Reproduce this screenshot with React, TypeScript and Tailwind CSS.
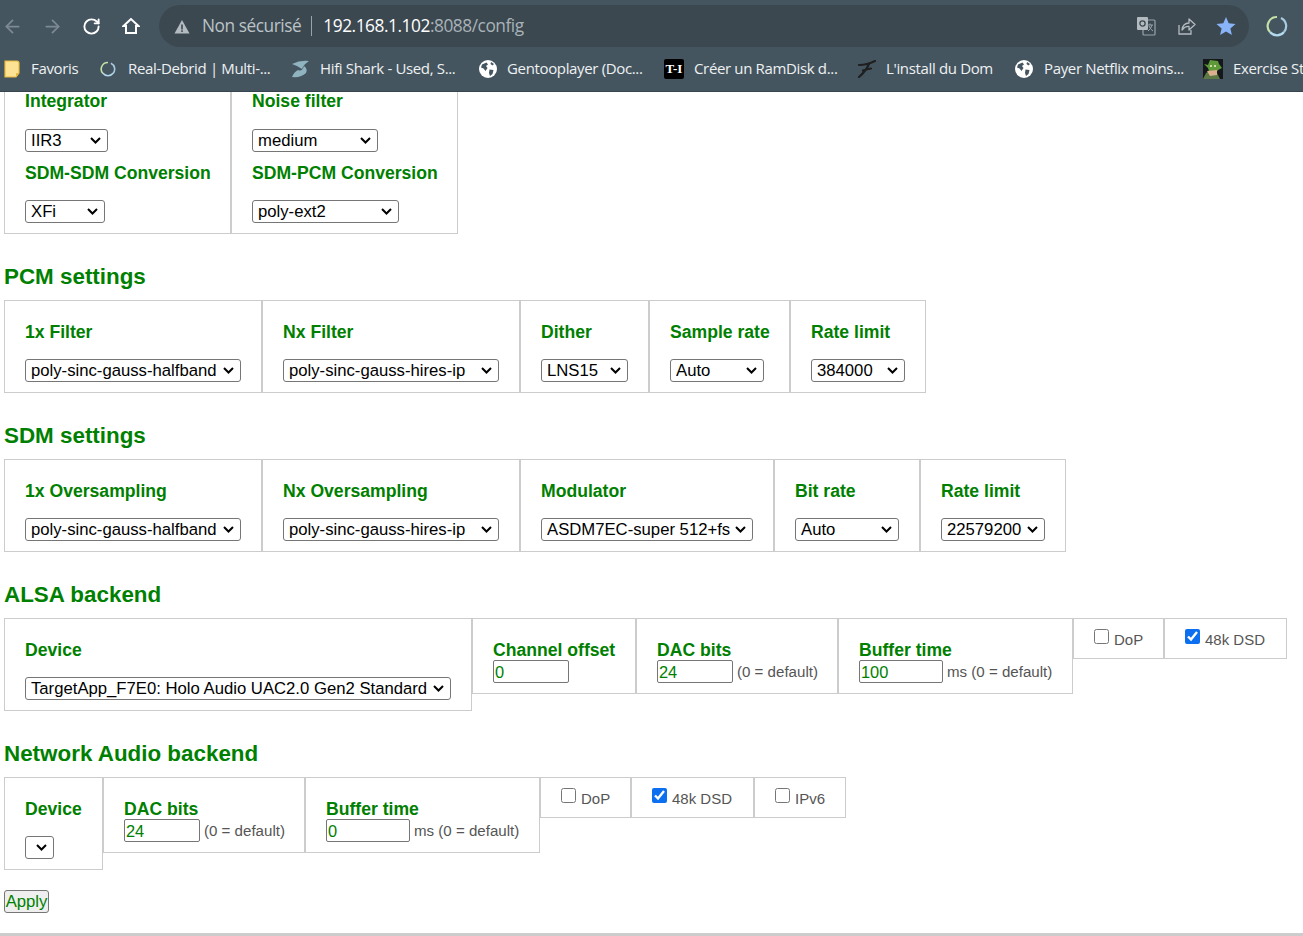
import React from "react";
import { ArrowLeft, ArrowRight, RotateCw } from "lucide-react";

const Globe = () => (
  <svg width="18" height="18" viewBox="0 0 18 18" className="shrink-0">
    <circle cx="9" cy="9" r="9" fill="#fff" />
    <path d="M3 4.5 L7.5 2.5 L9 4.5 L7 6 L8.5 8 L6.5 11 L4.5 8.5 L2 7.5 Z M10.5 9.5 L14.5 10 L13.5 14 L11 16 L10 13 Z M12 2 L15 4 L13.5 5.5 L11.5 4 Z" fill="#455560" />
  </svg>
);

const Ring = ({ size = 16 }: { size?: number }) => (
  <svg width={size} height={size} viewBox="0 0 22 22" className="shrink-0">
    <path d="M11 2 A9 9 0 0 0 4 17" fill="none" stroke="#c5e1a5" strokeWidth="2.2" />
    <path d="M4 17 A9 9 0 0 0 18 17" fill="none" stroke="#b3d9ee" strokeWidth="2.2" />
    <path d="M18 17 A9 9 0 0 0 15 3" fill="none" stroke="#a9cbe0" strokeWidth="2.2" />
  </svg>
);

const bookmarks = [
  { label: "Real-Debrid | Multi-...", width: "w-[191px]", gap: "gap-3", icon: <Ring /> },
  {
    label: "Hifi Shark - Used, S...",
    width: "w-[188px]",
    gap: "gap-[11px]",
    icon: (
      <svg width="18" height="18" viewBox="0 0 18 18" className="shrink-0">
        <path d="M1 4 Q9 0 18 1 Q13 4 11 9 Q7 6 1 4 Z M1 17 Q3 12 7 10 Q11 12 13 6 Q17 9 15 13 Q10 18 1 17 Z" fill="#8fb4c0" />
      </svg>
    ),
  },
  { label: "Gentooplayer (Doc...", width: "w-[185px]", gap: "gap-[10px]", icon: <Globe /> },
  {
    label: "Créer un RamDisk d...",
    width: "w-[193px]",
    gap: "gap-[10px]",
    icon: (
      <div className="flex h-5 w-5 shrink-0 items-center justify-center rounded-[2px] bg-black font-['Liberation_Serif',serif] text-[13px] font-bold leading-none tracking-normal text-white">
        T-I
      </div>
    ),
  },
  {
    label: "L'install du Dom",
    width: "w-[158px]",
    gap: "gap-[10px]",
    icon: (
      <svg width="19" height="18" viewBox="0 0 19 18" className="shrink-0">
        <path d="M2 5 Q10 5 18 1 M12 4 Q9 11 2 17 M6 10.5 Q10 9 14 8.5" fill="none" stroke="#1f1f1f" strokeWidth="2.2" strokeLinecap="round" />
      </svg>
    ),
  },
  { label: "Payer Netflix moins...", width: "w-[188px]", gap: "gap-[11px]", icon: <Globe /> },
  {
    label: "Exercise Static",
    width: "w-[120px]",
    gap: "gap-[10px]",
    icon: (
      <svg width="20" height="20" viewBox="0 0 20 20" className="shrink-0">
        <rect width="20" height="20" fill="#15181a" />
        <path d="M1 5 L5 6 L7 1 L15 2 L16 5 L19 9 L15 11 L13 14 L6 12 L5 9 Z" fill="#5e9a3a" />
        <path d="M0 20 L3 14 L6 12 L14 14 L17 20 Z" fill="#5d7a45" />
        <path d="M4 12 L14 11 L14 16 L7 17 Z" fill="#dcb08f" />
        <circle cx="8" cy="7" r="1" fill="#f2f2c8" />
        <circle cx="12" cy="7" r="1" fill="#f2f2c8" />
      </svg>
    ),
  },
];

const BrowserChrome = () => (
  <header className="h-[92px] shrink-0 overflow-hidden border-b border-[#37454e] bg-[#455560] font-['Open_Sans',sans-serif] text-white">
    <div className="flex h-[47px] items-center pt-[5px]">
      <div className="flex w-[159px] shrink-0 items-center pl-[2px]">
        <ArrowLeft size={21} className="text-[#7d8a93]" />
        <ArrowRight size={21} className="ml-[19px] text-[#7d8a93]" />
        <RotateCw size={19} strokeWidth={2.4} className="ml-[19px] text-white" />
        <svg width="18" height="18" viewBox="0 0 18 18" className="ml-[21px]">
          <path d="M9 2 L1.5 9 H4 V16 H14 V9 H16.5 Z" fill="none" stroke="#fff" strokeWidth="2" strokeLinejoin="miter" />
        </svg>
      </div>
      <div className="flex h-[42px] w-[1090px] shrink-0 items-center rounded-full bg-[#3b4850] pl-[15px] pr-[13px] text-[17.3px] tracking-[-0.45px]">
        <svg width="16" height="15" viewBox="0 0 16 15">
          <path d="M8 1 L15.5 14.5 H0.5 Z" fill="#b4bbc0" />
          <rect x="7.2" y="5.5" width="1.6" height="5" fill="#3b4850" />
          <rect x="7.2" y="11.3" width="1.6" height="1.6" fill="#3b4850" />
        </svg>
        <span className="ml-[12px] text-[#bcc3c8]">Non sécurisé</span>
        <span className="ml-[10px] h-[20px] w-px bg-[#98a2a9]" />
        <span className="ml-[11px] text-white">192.168.1.102</span>
        <span className="text-[#a9b2b8]">:8088/config</span>
        <div className="ml-auto flex items-center gap-[20px]">
          <svg width="20" height="20" viewBox="0 0 20 20">
            <rect x="7" y="4" width="12" height="15" rx="1" fill="none" stroke="#9aa4aa" strokeWidth="1.2" />
            <rect x="1" y="1" width="11" height="13" rx="1" fill="#b4bbc0" />
            <circle cx="6.5" cy="7.5" r="2.6" fill="none" stroke="#3b4850" strokeWidth="1.3" />
            <path d="M11 9 H17 M14 7.5 V9 M12 15 Q15 13 16 9 M13 10 Q14 13 17 15" fill="none" stroke="#9aa4aa" strokeWidth="1" />
          </svg>
          <svg width="20" height="20" viewBox="0 0 20 20">
            <path d="M3 9 V18 H15 V14" fill="none" stroke="#b4bbc0" strokeWidth="1.3" />
            <path d="M6 14 Q7 7 13 7 V3 L19 8.5 L13 14 V10.5 Q9 10 6 14 Z" fill="none" stroke="#b4bbc0" strokeWidth="1.3" strokeLinejoin="round" />
          </svg>
          <svg width="20" height="20" viewBox="0 0 20 20">
            <path d="M10 1 L12.7 7.3 L19.5 7.9 L14.4 12.4 L15.9 19 L10 15.5 L4.1 19 L5.6 12.4 L0.5 7.9 L7.3 7.3 Z" fill="#8ab4f8" />
          </svg>
        </div>
      </div>
      <div className="ml-[17px]">
        <Ring size={22} />
      </div>
    </div>
    <div className="flex h-[43px] items-center whitespace-nowrap text-[15px] tracking-[-0.35px] text-[#eef1f2]">
      <div className="flex w-[100px] shrink-0 items-center pl-[4px]">
        <svg width="16" height="18" viewBox="0 0 16 18" className="shrink-0">
          <path d="M1 1 H13 Q15 1 15 3 V13 L12 17 H1 Z" fill="#fde293" stroke="#e8b93f" strokeWidth="1.2" />
          <path d="M12 17 V13 H15 Z" fill="#e8b93f" />
        </svg>
        <span className="ml-[11px]">Favoris</span>
      </div>
      {bookmarks.map((item) => (
        <div key={item.label} className={`flex shrink-0 items-center ${item.width} ${item.gap}`}>
          {item.icon}
          <span>{item.label}</span>
        </div>
      ))}
    </div>
  </header>
);

const Cell = ({ className, children }: { className: string; children: React.ReactNode }) => (
  <div className={`shrink-0 border border-[#ccc] ${className}`}>{children}</div>
);

const Label = ({ children }: { children: React.ReactNode }) => (
  <div className="h-5 whitespace-nowrap text-[17.6px] font-bold leading-5 text-[#008000]">{children}</div>
);

// native arrow on the sandbox browser is thinner than the one in the picture, so it gets its own
const Choice = ({ value, className }: { value?: string; className: string }) => (
  <div className={`relative h-[23px] ${className}`}>
    <select
      defaultValue={value}
      className="block h-[23px] w-full appearance-none rounded-[3px] border border-[#767676] bg-white py-0 pl-[5px] text-[16.7px] leading-[21px] text-black"
    >
      {value && <option value={value}>{value}</option>}
    </select>
    <svg width="11" height="7" viewBox="0 0 11 7" className="pointer-events-none absolute right-[7px] top-2">
      <path d="M1 1 L5.5 5.5 L10 1" fill="none" stroke="#000" strokeWidth="2" />
    </svg>
  </div>
);

const NumberBox = ({ value, className }: { value: string; className: string }) => (
  <input
    type="text"
    defaultValue={value}
    className={`h-[23px] rounded-[2px] border border-[#767676] bg-white px-px pt-px text-[16.4px] text-[#008000] ${className}`}
  />
);

const Hint = ({ children }: { children: React.ReactNode }) => (
  <span className="ml-1 mt-px whitespace-nowrap text-[15.1px] text-[#555]">{children}</span>
);

const Check = ({ label, checked, className }: { label: string; checked?: boolean; className: string }) => (
  <Cell className={`flex h-[41px] items-start pl-5 pt-[9px] ${className}`}>
    <input type="checkbox" defaultChecked={checked} className="mt-[1px] h-[15px] w-[15px] accent-[#0b6ff0]" />
    <span className="ml-[5px] mt-[2px] whitespace-nowrap text-[15px] leading-5 text-[#555]">{label}</span>
  </Cell>
);

const Heading = ({ children }: { children: React.ReactNode }) => (
  <h2 className="pb-[11px] pt-[31px] text-[22.4px] font-bold leading-6 text-[#008000]">{children}</h2>
);

const SelectCell = ({ label, value, width, selectWidth }: { label: string; value: string; width: string; selectWidth: string }) => (
  <Cell className={`h-[93px] pl-5 pt-[21px] ${width}`}>
    <Label>{label}</Label>
    <Choice value={value} className={`mt-[17px] ${selectWidth}`} />
  </Cell>
);

const InputCell = ({ label, width, children }: { label: string; width: string; children: React.ReactNode }) => (
  <Cell className={`h-[76px] pl-5 pt-[21px] ${width}`}>
    <Label>{label}</Label>
    <div className="flex items-center">{children}</div>
  </Cell>
);

export default function App() {
  return (
    <div className="flex h-[936px] flex-col overflow-hidden bg-white font-['Liberation_Sans',Arial,sans-serif]">
      <BrowserChrome />
      <main className="px-1">
        <div className="flex">
          <div className="w-[227px] border-x border-b border-[#ccc] pl-5 pr-2">
            <div className="-mt-px">
              <Label>Integrator</Label>
            </div>
            <Choice value="IIR3" className="mt-[18px] w-[83px]" />
            <div className="h-[11px]" />
            <Label>SDM-SDM Conversion</Label>
            <Choice value="XFi" className="mt-[17px] w-[80px]" />
            <div className="h-[10px]" />
          </div>
          <div className="w-[227px] border-x border-b border-[#ccc] pl-5 pr-2">
            <div className="-mt-px">
              <Label>Noise filter</Label>
            </div>
            <Choice value="medium" className="mt-[18px] w-[126px]" />
            <div className="h-[11px]" />
            <Label>SDM-PCM Conversion</Label>
            <Choice value="poly-ext2" className="mt-[17px] w-[147px]" />
            <div className="h-[10px]" />
          </div>
        </div>

        <Heading>PCM settings</Heading>
        <div className="flex">
          <SelectCell label="1x Filter" value="poly-sinc-gauss-halfband" width="w-[258px]" selectWidth="w-[216px]" />
          <SelectCell label="Nx Filter" value="poly-sinc-gauss-hires-ip" width="w-[258px]" selectWidth="w-[216px]" />
          <SelectCell label="Dither" value="LNS15" width="w-[129px]" selectWidth="w-[87px]" />
          <SelectCell label="Sample rate" value="Auto" width="w-[141px]" selectWidth="w-[94px]" />
          <SelectCell label="Rate limit" value="384000" width="w-[136px]" selectWidth="w-[94px]" />
        </div>

        <Heading>SDM settings</Heading>
        <div className="flex">
          <SelectCell label="1x Oversampling" value="poly-sinc-gauss-halfband" width="w-[258px]" selectWidth="w-[216px]" />
          <SelectCell label="Nx Oversampling" value="poly-sinc-gauss-hires-ip" width="w-[258px]" selectWidth="w-[216px]" />
          <SelectCell label="Modulator" value="ASDM7EC-super 512+fs" width="w-[254px]" selectWidth="w-[212px]" />
          <SelectCell label="Bit rate" value="Auto" width="w-[146px]" selectWidth="w-[104px]" />
          <SelectCell label="Rate limit" value="22579200" width="w-[146px]" selectWidth="w-[104px]" />
        </div>

        <Heading>ALSA backend</Heading>
        <div className="flex items-start">
          <SelectCell label="Device" value="TargetApp_F7E0: Holo Audio UAC2.0 Gen2 Standard" width="w-[468px]" selectWidth="w-[426px]" />
          <InputCell label="Channel offset" width="w-[164px]">
            <NumberBox value="0" className="w-[76px]" />
          </InputCell>
          <InputCell label="DAC bits" width="w-[202px]">
            <NumberBox value="24" className="w-[76px]" />
            <Hint>(0 = default)</Hint>
          </InputCell>
          <InputCell label="Buffer time" width="w-[235px]">
            <NumberBox value="100" className="w-[84px]" />
            <Hint>ms (0 = default)</Hint>
          </InputCell>
          <Check label="DoP" className="w-[91px]" />
          <Check label="48k DSD" checked className="w-[123px]" />
        </div>

        <Heading>Network Audio backend</Heading>
        <div className="flex items-start">
          <Cell className="h-[93px] w-[99px] pl-5 pt-[21px]">
            <Label>Device</Label>
            <Choice className="mt-[17px] w-[29px]" />
          </Cell>
          <InputCell label="DAC bits" width="w-[202px]">
            <NumberBox value="24" className="w-[76px]" />
            <Hint>(0 = default)</Hint>
          </InputCell>
          <InputCell label="Buffer time" width="w-[235px]">
            <NumberBox value="0" className="w-[84px]" />
            <Hint>ms (0 = default)</Hint>
          </InputCell>
          <Check label="DoP" className="w-[91px]" />
          <Check label="48k DSD" checked className="w-[123px]" />
          <Check label="IPv6" className="w-[92px]" />
        </div>

        <button className="mt-5 block h-[23px] w-[45px] rounded-[3px] border border-[#767676] bg-[#efefef] p-0 pt-px text-[16.7px] leading-none text-[#008000]">
          Apply
        </button>
        <hr className="-mx-1 mt-5 h-[3px] border-0 bg-[#ccc]" />
      </main>
    </div>
  );
}
